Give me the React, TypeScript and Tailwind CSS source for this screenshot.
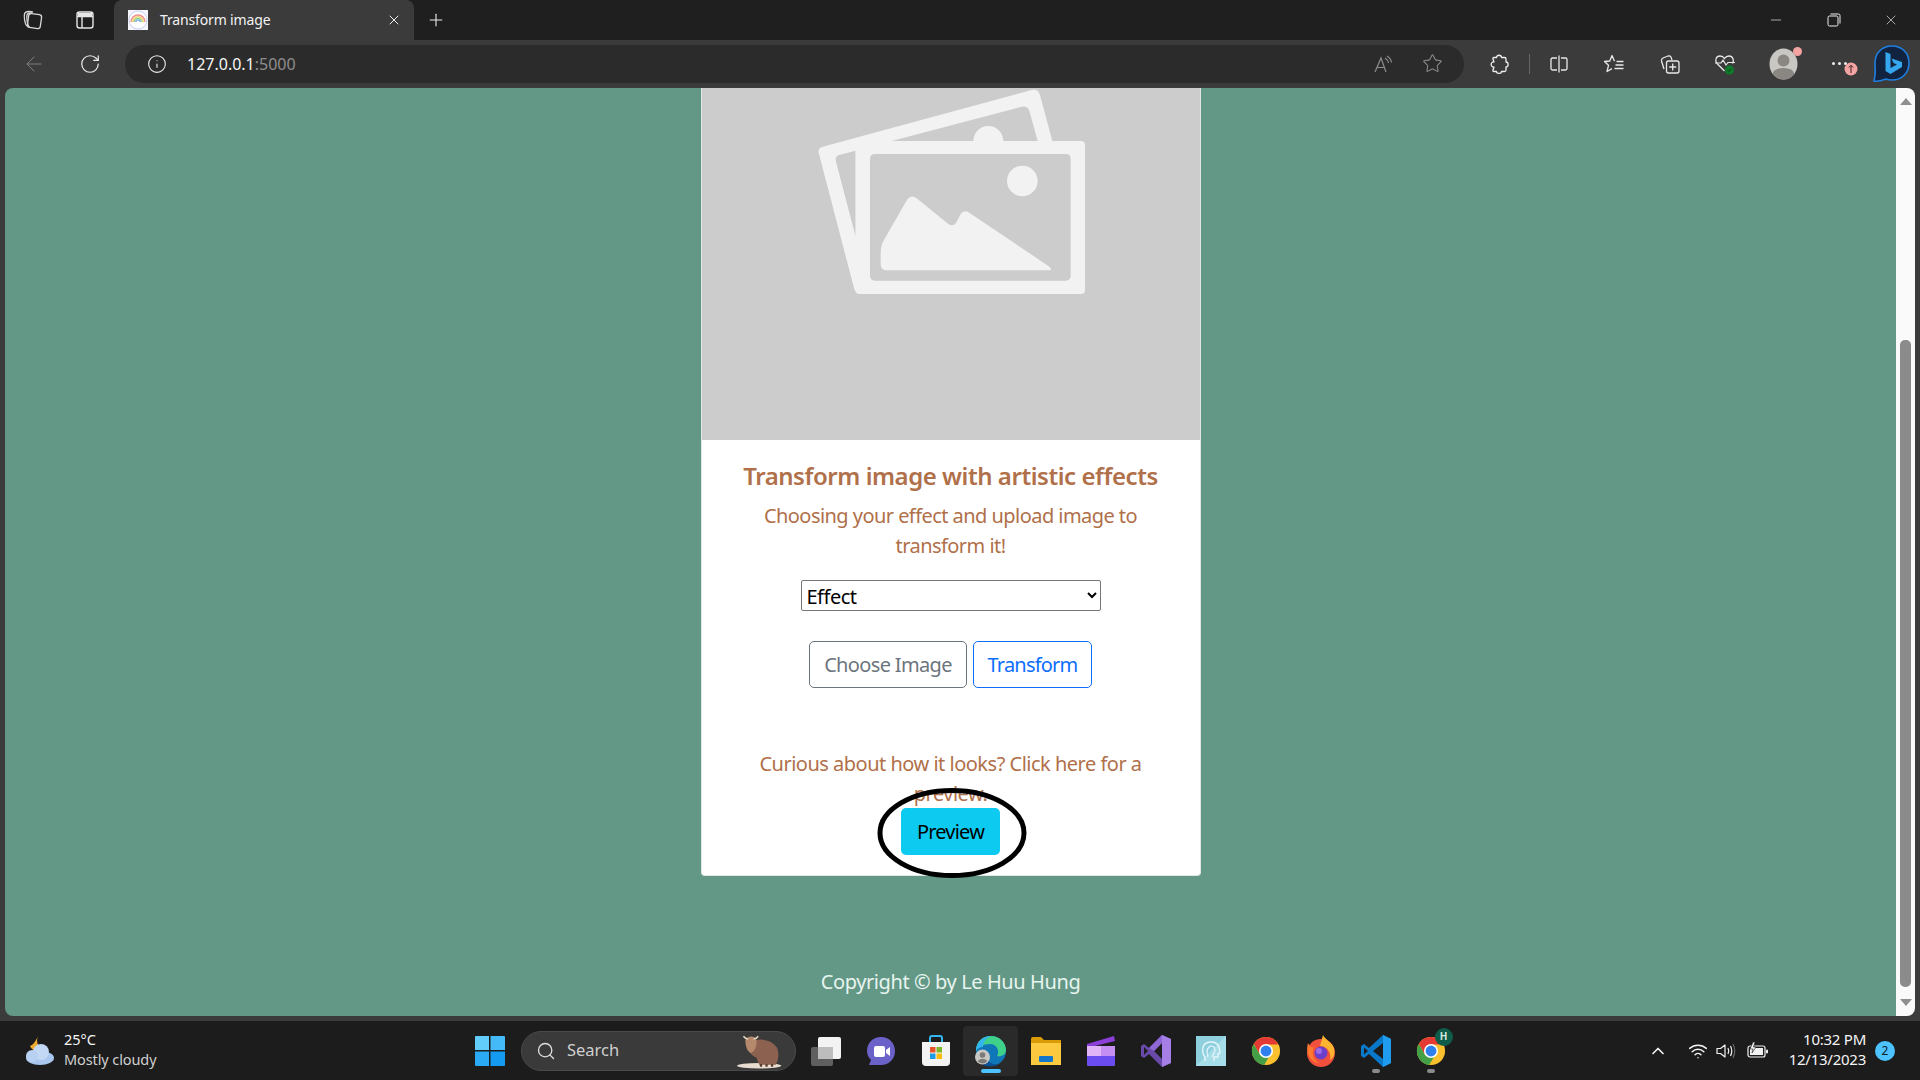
import {
  ArrowLeft,
  ChevronUp,
  Info,
  Minus,
  Plus,
  RotateCw,
  Search,
  Star,
  Wifi,
  X,
} from "lucide-react";

const font = "font-['Noto_Sans','Open_Sans',sans-serif]";

function WorkspacesIcon() {
  return (
    <svg width="22" height="22" viewBox="0 0 22 22" fill="none" stroke="#d8d8d8" strokeWidth="1.3">
      <rect x="7" y="5" width="13" height="14" rx="2.5" transform="rotate(8 13 12)" />
      <path d="M6 17 C3.5 15 3 7 3.5 5 C4 3 6 2.5 8 2.5 L12 3" />
      <path d="M8.5 18.5 C6 16 5.5 8 6 6 C6.5 4 9 4 11 4" />
    </svg>
  );
}

function TabsIcon() {
  return (
    <svg width="20" height="20" viewBox="0 0 20 20" fill="none" stroke="#e6e6e6" strokeWidth="1.4">
      <rect x="2" y="2" width="16" height="16" rx="2.5" />
      <path d="M2 6.5 H18 M7 6.5 V18" />
      <path d="M3 3 H17 V6 H3 Z" fill="#e6e6e6" stroke="none" />
    </svg>
  );
}

function Favicon() {
  return (
    <svg width="20" height="20" viewBox="0 0 20 20">
      <rect width="20" height="20" fill="#f4f6fb" />
      <circle cx="10" cy="10" r="9" fill="#fff" stroke="#b8c4ee" strokeWidth="0.8" />
      <path d="M3 12 A7 7 0 0 1 17 12" fill="none" stroke="#ee8f8f" strokeWidth="1.6" />
      <path d="M4.8 12 A5.2 5.2 0 0 1 15.2 12" fill="none" stroke="#efd36e" strokeWidth="1.6" />
      <path d="M6.5 12 A3.5 3.5 0 0 1 13.5 12" fill="none" stroke="#8fd08e" strokeWidth="1.6" />
      <path d="M8 12 A2 2 0 0 1 12 12" fill="none" stroke="#86b6e8" strokeWidth="1.5" />
    </svg>
  );
}

function RestoreIcon() {
  return (
    <svg width="14" height="14" viewBox="0 0 14 14" fill="none" stroke="#eee" strokeWidth="1">
      <rect x="1" y="3" width="10" height="10" rx="1.5" />
      <path d="M3.5 1 H11.5 Q13 1 13 2.5 V10.5" />
    </svg>
  );
}

function ReadAloudIcon() {
  return (
    <svg width="22" height="22" viewBox="0 0 22 22" fill="none" stroke="#8c8c8c" strokeWidth="1.2">
      <path d="M3 19 L9 5 L14 19 M5 14.5 H12.5" />
      <path d="M13 5 Q16 7 16.5 10 M15 3 Q19 5.5 19.5 9.5" />
    </svg>
  );
}

function ExtensionsIcon() {
  return (
    <svg width="20" height="22" viewBox="0 0 20 22" fill="none" stroke="#eeeeee" strokeWidth="1.3" strokeLinejoin="round">
      <path d="M7.5 4.5 C7.5 1.5 12.5 1.5 12.5 4.5 H15.5 Q17 4.5 17 6 V9 C19.8 9 19.8 14 17 14 V17 Q17 18.5 15.5 18.5 H12.5 C12.5 21 7.5 21 7.5 18.5 H5 Q3.5 18.5 4 17 L5 14 C1.2 14.5 1.2 8.5 5 9 L4 6 Q3.5 4.5 5 4.5 Z" />
    </svg>
  );
}

function SplitIcon() {
  return (
    <svg width="20" height="20" viewBox="0 0 20 20" fill="none" stroke="#e8e8e8" strokeWidth="1.3">
      <path d="M8 4 H3.5 Q2 4 2 5.5 V14.5 Q2 16 3.5 16 H8" />
      <path d="M12 4 H16.5 Q18 4 18 5.5 V14.5 Q18 16 16.5 16 H12" />
      <path d="M10 1.5 V18.5" />
    </svg>
  );
}

function FavoritesIcon() {
  return (
    <svg width="22" height="22" viewBox="0 0 22 22" fill="none" stroke="#e8e8e8" strokeWidth="1.3">
      <path d="M11.5 8.3 L9 2.5 L6.8 8 L1.5 8.5 L5.5 12.3 L4 18.5 L9 15.6" strokeLinejoin="round" />
      <path d="M13.5 8.5 H20.5 M12.5 12 H20.5 M11.5 15.5 H20.5" />
    </svg>
  );
}

function CollectionsIcon() {
  return (
    <svg width="22" height="22" viewBox="0 0 22 22" fill="none" stroke="#e8e8e8" strokeWidth="1.3">
      <path d="M5 16 L2.5 8 Q2 6 4 5 L9 3 Q11 2.5 12 4 L13 7" />
      <rect x="7.5" y="8" width="12.5" height="12" rx="2" />
      <path d="M13.7 10.5 V17.5 M10.2 14 H17.2" />
    </svg>
  );
}

function HealthIcon() {
  return (
    <svg width="24" height="24" viewBox="0 0 24 24" fill="none">
      <path
        d="M11.5 19 L4 11.5 C1.5 8.5 3 4 7 4 C9 4 10.5 5 11.5 6.5 C12.5 5 14 4 16 4 C20 4 21.5 8.5 19.5 11.5"
        stroke="#e8e8e8"
        strokeWidth="1.3"
      />
      <path d="M2 11 H8 L10 8 L13 13 L15 10.5 H22" stroke="#e8e8e8" strokeWidth="1.2" />
      <circle cx="16.5" cy="18" r="4.5" fill="#0e7a2a" />
      <path d="M14.5 18 L16 19.5 L18.5 16.8" stroke="#0b3d18" strokeWidth="1" />
    </svg>
  );
}

function ProfileIcon() {
  return (
    <div className="relative h-[32px] w-[30px]">
      <svg width="30" height="32" viewBox="0 0 30 32">
        <ellipse cx="14.5" cy="16" rx="14" ry="15.5" fill="#c9c7c3" />
        <circle cx="14.5" cy="12.5" r="6" fill="#8a8783" />
        <path d="M3.5 26 Q5 20 14.5 20 Q24 20 25.5 26 Q21 31.5 14.5 31.5 Q8 31.5 3.5 26 Z" fill="#8a8783" />
      </svg>
      <div className="absolute right-[-3px] top-[-1px] h-[9px] w-[9px] rounded-full bg-[#f4a3a3]" />
    </div>
  );
}

function MoreIcon() {
  return (
    <div className="relative h-[24px] w-[28px]">
      <div className="absolute left-0 top-[10px] flex gap-[3px]">
        <div className="h-[3px] w-[3px] rounded-full bg-[#eee]" />
        <div className="h-[3px] w-[3px] rounded-full bg-[#eee]" />
        <div className="h-[3px] w-[3px] rounded-full bg-[#eee]" />
      </div>
      <svg className="absolute left-[12px] top-[10px]" width="14" height="14" viewBox="0 0 14 14">
        <circle cx="7" cy="7" r="6.5" fill="#f4a3a3" />
        <path d="M7 11 V3.5 M4.8 5.5 L7 3.3 L9.2 5.5" stroke="#3a2020" strokeWidth="1" fill="none" />
      </svg>
    </div>
  );
}

function BingIcon() {
  return (
    <svg width="38" height="42" viewBox="0 0 38 42">
      <path
        d="M19 2 C9 2 2 9 2 19 C2 24 3 30 1 37 C6 38 10 36 13 35 C15 36 17 36 19 36 C29 36 36 29 36 19 C36 9 29 2 19 2 Z"
        fill="#12233f"
        stroke="#1f7fe0"
        strokeWidth="1.6"
      />
      <path d="M12.5 8 L17.5 10 V24 L24 20.5 L20.5 19 L18.5 14.5 L29 18 V23 L17.5 30 L12.5 27 Z" fill="#35a7ee" />
    </svg>
  );
}

function WeatherIcon() {
  return (
    <svg width="32" height="32" viewBox="0 0 32 32">
      <path d="M14 1 C12 6 13 12 20 15 C15 18 8 16 6 11 C9 10 12 6 14 1 Z" fill="#f0a92c" />
      <ellipse cx="16" cy="23" rx="14" ry="7" fill="#a9c7ee" />
      <circle cx="17" cy="17" r="8" fill="#c3d8f5" />
      <circle cx="8" cy="21" r="6" fill="#b8d0f2" />
    </svg>
  );
}

function StartIcon() {
  return (
    <svg width="30" height="30" viewBox="0 0 30 30">
      <path d="M0 1 Q0 0 1 0 H14 V14 H0 Z" fill="#62cdfb" />
      <path d="M15.5 0 H29 Q30 0 30 1 V14 H15.5 Z" fill="#45baf8" />
      <path d="M0 15.5 H14 V30 H1 Q0 30 0 29 Z" fill="#2aa9f5" />
      <path d="M15.5 15.5 H30 V29 Q30 30 29 30 H15.5 Z" fill="#149af0" />
    </svg>
  );
}

function YakIcon() {
  return (
    <svg width="48" height="38" viewBox="0 0 52 40">
      <ellipse cx="24" cy="36" rx="24" ry="3" fill="#e8dcd0" />
      <path d="M18 9 C26 6 38 8 43 16 C46 22 45 30 42 35 H24 L21 27 C15 25 12 20 11 14 Z" fill="#8d6150" />
      <path d="M9 8 C12 3 19 3 21 8 C22 14 19 21 15 22 C11 21 9 14 9 8 Z" fill="#b58a6c" />
      <path d="M7 4 Q9 7 12 7 M23 4 Q21 7 18 7" stroke="#e6d6c0" strokeWidth="1.6" fill="none" />
      <path d="M26 34 V37 M32 34 V37 M38 34 V37" stroke="#5a3c2e" strokeWidth="2.4" />
    </svg>
  );
}

function TaskViewIcon() {
  return (
    <svg width="30" height="30" viewBox="0 0 30 30">
      <rect x="0" y="11" width="22" height="19" rx="2" fill="#5f5f5f" />
      <rect x="7" y="1" width="23" height="22" rx="2" fill="#f3f3f3" />
      <rect x="7" y="11" width="15" height="12" fill="#bdbdbd" />
    </svg>
  );
}

function ChatIcon() {
  return (
    <svg width="30" height="30" viewBox="0 0 30 30">
      <path d="M15 1 C23 1 29 7 29 15 C29 23 23 29 15 29 H3 L5 24 C2 21 1 18 1 15 C1 7 7 1 15 1 Z" fill="#6b62c9" />
      <rect x="8" y="10" width="11" height="11" rx="2" fill="#fff" />
      <path d="M20 14 L24 11 V20 L20 17 Z" fill="#fff" />
    </svg>
  );
}

function StoreIcon() {
  return (
    <svg width="30" height="32" viewBox="0 0 30 32">
      <path d="M9 8 V3 Q9 1 11 1 H19 Q21 1 21 3 V8" fill="none" stroke="#35b4f2" strokeWidth="2" />
      <path d="M1 7 H29 V27 Q29 31 25 31 H5 Q1 31 1 27 Z" fill="#f3f3f3" />
      <rect x="9" y="12" width="5.5" height="5.5" fill="#e8532c" />
      <rect x="15.5" y="12" width="5.5" height="5.5" fill="#7cb82c" />
      <rect x="9" y="18.5" width="5.5" height="5.5" fill="#1b9be6" />
      <rect x="15.5" y="18.5" width="5.5" height="5.5" fill="#fbbc09" />
    </svg>
  );
}

function EdgeIcon() {
  return (
    <svg width="32" height="32" viewBox="0 0 32 32">
      <circle cx="16" cy="16" r="15" fill="#0f76b8" />
      <path d="M1 16 C1 6 8 1 16 1 C25 1 31 8 31 15 C31 20 26 22 22 21 C25 16 22 9 15 9 C8 9 3 12 1 16 Z" fill="#3fd08a" />
      <path d="M1 16 C1 7 8 1 16 1 C11 3 8 7 8 12 C5 12 2 14 1 16 Z" fill="#34b4ec" />
      <path d="M8 30 C12 32 20 32 24 29 C18 30 14 28 12 24 Z" fill="#0b4f94" />
      <circle cx="7.5" cy="22" r="7.5" fill="#c9c7c3" />
      <circle cx="7.5" cy="20" r="2.8" fill="#7c7a77" />
      <path d="M2.5 26 Q7.5 21.5 12.5 26 Q7.5 31 2.5 26 Z" fill="#7c7a77" />
    </svg>
  );
}

function ExplorerIcon() {
  return (
    <svg width="30" height="28" viewBox="0 0 30 28">
      <path d="M0 2 Q0 0 2 0 H10 L13 3 H30 V12 H0 Z" fill="#d99c08" />
      <path d="M0 6 H30 V28 H0 Z" fill="#fdc93f" />
      <rect x="8" y="19" width="14" height="6" rx="1" fill="#1477c9" />
    </svg>
  );
}

function ClipchampIcon() {
  return (
    <svg width="30" height="32" viewBox="0 0 30 32">
      <path d="M1 9 L28 1 L29 6 L1 13 Z" fill="#8c3fd8" />
      <path d="M1 11 H29 V29 Q29 31 27 31 H3 Q1 31 1 29 Z" fill="#b478ee" />
      <path d="M1 11 H15 V21 H1 Z" fill="#e0b4f7" />
      <path d="M15 11 H29 V21 H15 Z" fill="#c48ef2" />
      <path d="M1 21 H29 V29 Q29 31 27 31 H3 Q1 31 1 29 Z" fill="#6a4cf0" />
    </svg>
  );
}

function VisualStudioIcon() {
  return (
    <svg width="30" height="32" viewBox="0 0 30 32">
      <path d="M21 0 L30 4 V28 L21 32 L8 19 L3 23 L0 21 V11 L3 9 L8 13 Z" fill="#6a4aa8" />
      <path d="M21 0 L30 4 V28 L21 32 Z" fill="#a57fe6" />
      <path d="M21 8 L13 16 L21 24 Z" fill="#1e1e1e" />
      <path d="M3 12 L7 16 L3 20 Z" fill="#1e1e1e" />
      <path d="M21 0 L21 8 L13 16 L8 13 Z" fill="#8f68d8" />
    </svg>
  );
}

function PhotoAppIcon() {
  return (
    <svg width="30" height="30" viewBox="0 0 30 30">
      <rect width="30" height="30" fill="#8fd0de" />
      <path d="M0 30 L30 0 V30 Z" fill="#a7dde8" />
      <path
        d="M9 25 V21 C6 18 6 12 8 9 C11 5 19 5 22 9 C24 12 24 15 24 17 L22 18 V21 H18 V25"
        fill="none"
        stroke="#e4f6f9"
        strokeWidth="1.4"
      />
      <path d="M12 21 C10 16 11 11 15 10 C19 10 20 14 18 17 L16 21" fill="none" stroke="#e4f6f9" strokeWidth="1.2" />
    </svg>
  );
}

function ChromeIcon() {
  return (
    <svg width="30" height="32" viewBox="0 0 32 32">
      <circle cx="16" cy="16" r="15" fill="#fbc02d" />
      <path d="M16 1 A15 15 0 0 0 3 8.5 L9.5 20 L16 9 H29 A15 15 0 0 0 16 1 Z" fill="#e53935" />
      <path d="M3 8.5 A15 15 0 0 0 14 31 L20.5 20 H9.5 Z" fill="#43a047" />
      <circle cx="16" cy="16" r="7.5" fill="#fff" />
      <circle cx="16" cy="16" r="5.8" fill="#2f80ed" />
    </svg>
  );
}

function FirefoxIcon() {
  return (
    <svg width="30" height="32" viewBox="0 0 30 32">
      <circle cx="15" cy="18" r="14" fill="#f0503c" />
      <path d="M17 0 C19 4 24 6 27 11 C30 17 28 23 24 25 C26 18 21 11 14 11 C15 7 16 4 17 0 Z" fill="#fdb52f" />
      <path d="M2 8 C4 12 5 13 8 12 C6 17 6 24 13 28 C5 28 -1 18 2 8 Z" fill="#ff7a2e" />
      <circle cx="15" cy="18" r="6.5" fill="#6b3fc9" />
      <circle cx="13" cy="16" r="3" fill="#9d6be6" />
    </svg>
  );
}

function VSCodeIcon() {
  return (
    <svg width="30" height="32" viewBox="0 0 30 32">
      <path d="M22 0 L30 4 V28 L22 32 L8 19 L3 23 L0 21 V11 L3 9 L8 13 Z" fill="#0a78c9" />
      <path d="M22 0 L30 4 V28 L22 32 Z" fill="#1f9cf0" />
      <path d="M22 8 L12 16 L22 24 Z" fill="#1c1c1c" />
      <path d="M3 12.5 L7 16 L3 19.5 Z" fill="#1c1c1c" />
    </svg>
  );
}

function BatteryIcon() {
  return (
    <svg width="22" height="18" viewBox="0 0 22 18" fill="none">
      <rect x="1" y="4" width="17" height="11" rx="2" stroke="#f2f2f2" strokeWidth="1.2" />
      <rect x="3" y="6" width="13" height="7" fill="#f2f2f2" />
      <rect x="19" y="7.5" width="2" height="4" rx="1" fill="#f2f2f2" />
      <path d="M6 0 L3 7 H6 L5 11 L9 5 H6.5 L8 0 Z" fill="#f2f2f2" stroke="#1c1c1c" strokeWidth="0.6" />
    </svg>
  );
}

function SpeakerIcon() {
  return (
    <svg width="22" height="18" viewBox="0 0 22 18" fill="none" stroke="#f2f2f2" strokeWidth="1.2">
      <path d="M1 6.5 H4.5 L9 3 V15 L4.5 11.5 H1 Z" strokeLinejoin="round" />
      <path d="M12 6 Q13.5 9 12 12 M14.5 4 Q17 9 14.5 14" />
      <path d="M17 2 Q20.5 9 17 16" stroke="#666" />
    </svg>
  );
}

function PlaceholderArt() {
  return (
    <svg className="block" width="499" height="352" viewBox="36 24 1497 1056">
      <path
        d="M398 200 L1025 30 Q1045 27 1050 45 L1087 183 V642 H510 Q497 642 493 628 L386 218 Q383 204 398 200 Z"
        fill="#f2f2f2"
      />
      <path d="M605 183 L995 80 Q1012 76 1018 92 L1043 183 H940 A45 45 0 0 0 850 183 Z" fill="#cccccc" />
      <path d="M497 212 L445 226 Q434 230 438 245 L497 470 Z" fill="#cccccc" />
      <rect x="497" y="183" width="688" height="459" rx="12" fill="#f2f2f2" />
      <rect x="540" y="222" width="602" height="380" rx="14" fill="#cccccc" />
      <circle cx="997" cy="303" r="46" fill="#f2f2f2" />
      <path
        d="M652 358 Q665 343 680 355 L775 432 Q790 442 800 425 L812 402 Q822 388 838 398 L1078 560 Q1090 571 1075 571 H590 Q572 571 572 552 V520 Q572 495 582 480 Z"
        fill="#f2f2f2"
      />
    </svg>
  );
}

function TaskbarSlot({ children, active, dot }: { children: React.ReactNode; active?: boolean; dot?: boolean }) {
  return (
    <div
      className={`relative flex h-[50px] w-[55px] items-center justify-center rounded-[4px] ${
        active ? "bg-[#2a2a2a]" : ""
      }`}
    >
      {children}
      {active ? <div className="absolute bottom-[3px] h-[4px] w-[20px] rounded-full bg-[#4cc2ff]" /> : null}
      {dot ? <div className="absolute bottom-[3px] h-[4px] w-[8px] rounded-full bg-[#8a8a8a]" /> : null}
    </div>
  );
}

export default function App() {
  return (
    <div className={`flex h-[1080px] w-[1920px] flex-col overflow-hidden bg-[#3b3b3b] ${font}`}>
      {/* title bar */}
      <div className="flex h-[40px] bg-[#1f1f1f] text-white">
        <div className="flex w-[114px] items-center pl-[21px]">
          <WorkspacesIcon />
          <div className="ml-[32px]">
            <TabsIcon />
          </div>
        </div>
        <div className="flex h-[40px] w-[300px] items-center rounded-t-[8px] bg-[#3b3b3b] pl-[14px] pr-[12px]">
          <Favicon />
          <span className="ml-[12px] mb-[1px] flex-1 text-[14px] tracking-[-0.15px] text-[#f2f2f2]">Transform image</span>
          <X size={16} strokeWidth={1.5} className="text-[#eee]" />
        </div>
        <div className="ml-[12px] flex items-center">
          <Plus size={20} strokeWidth={1.3} className="text-[#eee]" />
        </div>
        <div className="ml-auto flex items-center pr-[21px]">
          <Minus size={16} strokeWidth={1} className="text-[#eee]" />
          <div className="ml-[43px]">
            <RestoreIcon />
          </div>
          <div className="ml-[42px]">
            <X size={16} strokeWidth={1} className="text-[#eee]" />
          </div>
        </div>
      </div>

      {/* toolbar */}
      <div className="flex h-[48px] items-center pb-[1px]">
        <div className="flex w-[125px] items-center pl-[22px]">
          <ArrowLeft size={24} strokeWidth={1} className="text-[#7f7f7f]" />
          <RotateCw size={22} strokeWidth={1.3} className="ml-[33px] text-[#eee]" />
        </div>
        <div className="flex h-[38px] w-[1339px] items-center rounded-full bg-[#2b2b2b] pl-[22px] pr-[21px]">
          <Info size={20} strokeWidth={1.3} className="text-[#eee]" />
          <span className="ml-[20px] flex-1 text-[16px] text-[#f5f5f5]">
            127.0.0.1<span className="text-[#8e8e8e]">:5000</span>
          </span>
          <ReadAloudIcon />
          <Star size={21} strokeWidth={1.2} className="ml-[28px] text-[#8c8c8c]" />
        </div>
        <div className="ml-[25px]">
          <ExtensionsIcon />
        </div>
        <div className="ml-[20px] h-[20px] w-[1px] bg-[#666]" />
        <div className="ml-[19px]">
          <SplitIcon />
        </div>
        <div className="ml-[34px]">
          <FavoritesIcon />
        </div>
        <div className="ml-[34px]">
          <CollectionsIcon />
        </div>
        <div className="ml-[32px]">
          <HealthIcon />
        </div>
        <div className="ml-[32px]">
          <ProfileIcon />
        </div>
        <div className="ml-[33px]">
          <MoreIcon />
        </div>
        <div className="ml-[13px] mt-[2px]">
          <BingIcon />
        </div>
      </div>

      {/* page */}
      <div className="flex h-[928px] pl-[5px] pr-[5px]">
        <div className="relative flex h-full w-[1891px] flex-col items-center overflow-hidden rounded-l-[8px] bg-[#629885]">
          <div className="relative h-[788px] w-[500px] rounded-b-[4px] border-x border-b border-[#e2e6e4] bg-white">
            <div className="h-[352px] bg-[#cccccc]">
              <PlaceholderArt />
            </div>
            <div className="flex flex-col items-center text-[#b0704a]">
              <h5 className="mt-[21px] text-[24px] font-semibold leading-[29px] tracking-[-0.45px]">
                Transform image with artistic effects
              </h5>
              <p className="mt-[11px] w-[460px] text-center text-[20px] leading-[30px] tracking-[-0.55px]">
                Choosing your effect and upload image to transform it!
              </p>
              <select className="mt-[19px] h-[31px] w-[300px] rounded-[2px] border border-[#767676] bg-white px-[1px] pt-[1px] text-[20px] leading-[24px] tracking-[-0.5px] text-black">
                <option>Effect</option>
              </select>
              <div className="mt-[30px] flex gap-[6px]">
                <button className="h-[47px] w-[158px] rounded-[5px] border border-[#6c757d] text-[20px] tracking-[-0.65px] text-[#6c757d]">
                  Choose Image
                </button>
                <button className="h-[47px] w-[119px] rounded-[5px] border border-[#0d6efd] text-[20px] tracking-[-0.8px] text-[#0d6efd]">
                  Transform
                </button>
              </div>
              <p className="mt-[61px] w-[460px] text-center text-[20px] leading-[30px] tracking-[-0.5px]">
                Curious about how it looks? Click here for a preview.
              </p>
              <button className="relative z-10 mt-[-1px] h-[47px] w-[99px] rounded-[5px] bg-[#0dcaf0] text-[20px] tracking-[-0.8px] text-black">
                Preview
              </button>
            </div>
            <svg
              className="absolute left-[175px] top-[699px] z-20"
              width="150"
              height="92"
              viewBox="0 0 150 92"
              fill="none"
            >
              <ellipse cx="75" cy="46" rx="72" ry="42.5" stroke="#000" strokeWidth="5" />
            </svg>
          </div>
          <div className="mt-[91px] text-[20px] leading-[30px] tracking-[-0.4px] text-[#e8f4ef]">
            Copyright © by Le Huu Hung
          </div>
        </div>
        <div className="relative flex h-full w-[19px] flex-col items-center rounded-r-[8px] bg-[#fafafa]">
          <div className="absolute top-[10px] h-0 w-0 border-x-[6px] border-b-[7px] border-x-transparent border-b-[#8f8f8f]" />
          <div className="absolute top-[252px] h-[647px] w-[11px] rounded-[5px] bg-[#8b8b8b]" />
          <div className="absolute bottom-[10px] h-0 w-0 border-x-[6px] border-t-[7px] border-x-transparent border-t-[#8f8f8f]" />
        </div>
      </div>

      {/* taskbar */}
      <div className="mt-[5px] flex h-[59px] items-center bg-[#1c1c1c] text-white">
        <div className="flex w-[475px] items-center pl-[24px]">
          <WeatherIcon />
          <div className="mb-[4px] ml-[8px] text-[14.5px] leading-[20px]">
            <div className="text-[#f5f5f5]">25°C</div>
            <div className="tracking-[-0.1px] text-[#cfcfcf]">Mostly cloudy</div>
          </div>
        </div>
        <StartIcon />
        <div className="ml-[16px] flex h-[40px] w-[275px] items-center rounded-full border border-[#4a4a4a] bg-[#3a3a3a] pl-[14px] pr-[10px]">
          <Search size={20} strokeWidth={1.6} className="text-[#e0e0e0]" />
          <span className="ml-[11px] flex-1 text-[16.5px] text-[#cfcfcf]">Search</span>
          <YakIcon />
        </div>
        <div className="ml-[2px] flex items-center">
          <TaskbarSlot>
            <TaskViewIcon />
          </TaskbarSlot>
          <TaskbarSlot>
            <ChatIcon />
          </TaskbarSlot>
          <TaskbarSlot>
            <StoreIcon />
          </TaskbarSlot>
          <TaskbarSlot active>
            <EdgeIcon />
          </TaskbarSlot>
          <TaskbarSlot>
            <ExplorerIcon />
          </TaskbarSlot>
          <TaskbarSlot>
            <ClipchampIcon />
          </TaskbarSlot>
          <TaskbarSlot>
            <VisualStudioIcon />
          </TaskbarSlot>
          <TaskbarSlot>
            <PhotoAppIcon />
          </TaskbarSlot>
          <TaskbarSlot>
            <ChromeIcon />
          </TaskbarSlot>
          <TaskbarSlot>
            <FirefoxIcon />
          </TaskbarSlot>
          <TaskbarSlot dot>
            <VSCodeIcon />
          </TaskbarSlot>
          <TaskbarSlot dot>
            <div className="relative">
              <ChromeIcon />
              <div className="absolute right-[-7px] top-[-7px] flex h-[18px] w-[18px] items-center justify-center rounded-full bg-[#0f5c4a] text-[10px] font-bold text-[#cfe8df]">
                H
              </div>
            </div>
          </TaskbarSlot>
        </div>
        <div className="ml-auto flex items-center pr-[25px]">
          <ChevronUp size={20} strokeWidth={2} className="text-[#f2f2f2]" />
          <Wifi size={20} strokeWidth={1.8} className="ml-[20px] text-[#f2f2f2]" />
          <div className="ml-[8px]">
            <SpeakerIcon />
          </div>
          <div className="ml-[9px]">
            <BatteryIcon />
          </div>
          <div className="mb-[4px] ml-[20px] text-right text-[15px] leading-[20px] tracking-[-0.25px] text-[#f5f5f5]">
            <div>10:32 PM</div>
            <div>12/13/2023</div>
          </div>
          <div className="ml-[9px] flex h-[20px] w-[20px] items-center justify-center rounded-full bg-[#4cc2ff] text-[12px] text-[#10202c]">
            2
          </div>
        </div>
      </div>
    </div>
  );
}
